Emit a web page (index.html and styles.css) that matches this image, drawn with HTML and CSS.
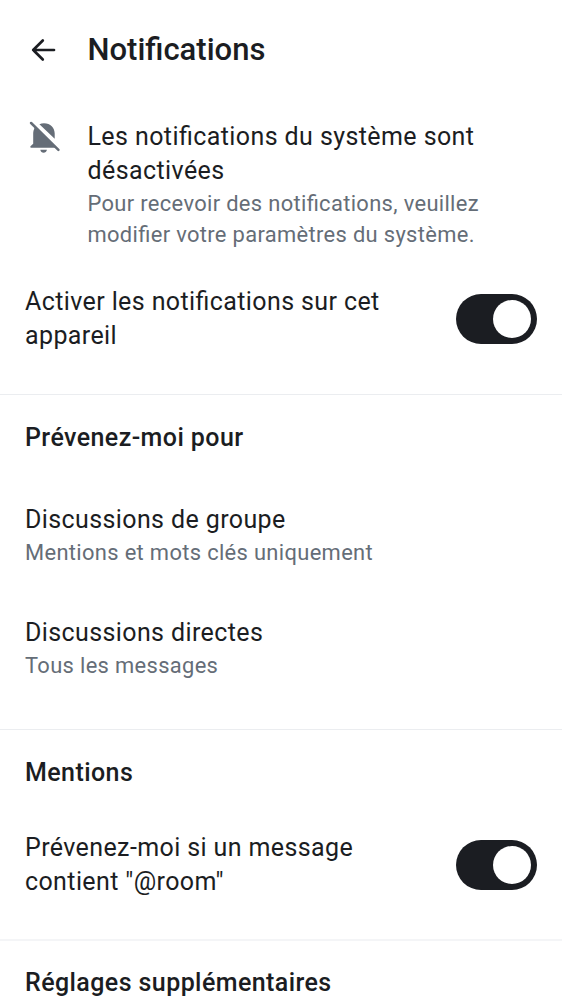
FILE: index.html
```html
<!DOCTYPE html>
<html lang="fr">
<head>
<meta charset="utf-8">
<title>Notifications</title>
<link rel="stylesheet" href="styles.css">
</head>
<body>
<header class="app-bar">
  <svg class="back" viewBox="0 0 32 32"><path d="M14.800 6.500 5.200 16l9.600 9.500M5.200 16H26" fill="none" stroke="currentColor" stroke-width="2.700" stroke-linecap="round" stroke-linejoin="round"/></svg>
  <h1 class="page-title">Notifications</h1>
</header>
<main>
  <section class="notice">
    <svg class="bell" viewBox="0 0 32 34"><path d="M11.400 4.200C12.800 3.500 14.300 3.200 16 3.200C22.500 3.200 26.700 8 26.700 13.500V18.800ZM6.300 6L28 27.800H3.200C2 27.800 2 26.300 3 25.700L5.200 23.800V13C5.200 11.500 5.600 10 6.300 8.700ZM12.300 29.700H18.900C18.500 33.600 12.700 33.600 12.300 29.700Z" fill="currentColor"/><path d="M3.100 3L30.400 29.800" stroke="currentColor" stroke-width="2.500" stroke-linecap="round"/></svg>
    <div>
      <div class="label">Les notifications du système sont<br>désactivées</div>
      <div class="sub">Pour recevoir des notifications, veuillez<br>modifier votre paramètres du système.</div>
    </div>
  </section>
  <section class="toggle-row">
    <div class="label">Activer les notifications sur cet<br>appareil</div>
    <div class="switch"><span class="thumb"></span></div>
  </section>
  <section class="group group-notify">
    <h2 class="heading">Prévenez-moi pour</h2>
    <div class="option">
      <div class="label">Discussions de groupe</div>
      <div class="sub">Mentions et mots clés uniquement</div>
    </div>
    <div class="option">
      <div class="label">Discussions directes</div>
      <div class="sub">Tous les messages</div>
    </div>
  </section>
  <section class="group group-mentions">
    <h2 class="heading">Mentions</h2>
    <div class="toggle-row">
      <div class="label">Prévenez-moi si un message<br>contient "@room"</div>
      <div class="switch"><span class="thumb"></span></div>
    </div>
  </section>
  <section class="group group-extra">
    <h2 class="heading">Réglages supplémentaires</h2>
  </section>
</main>
</body>
</html>
```
FILE: styles.css
```css
* { box-sizing: border-box; }
html { overflow: hidden; }
body {
  margin: 0;
  height: 1000px;
  overflow: hidden;
  background: #fff;
  color: #1b1d22;
  font-family: Roboto, sans-serif;
  font-feature-settings: "liga" 1;
}
.app-bar {
  height: 100px;
  padding: 0 28px;
  display: flex;
  align-items: center;
}
.back { width: 32px; height: 32px; }
.page-title {
  margin: 0 0 0 27.500px;
  font-size: 31px;
  font-weight: 500;
  line-height: 40px;
}
.notice {
  display: flex;
  gap: 27.500px;
  padding: 20px 28px 0;
  height: 165px;
}
.bell { width: 32px; height: 34px; color: #656d77; flex: none; }
.label { font-size: 25px; line-height: 34.400px; letter-spacing: .39px; white-space: nowrap; }
.sub { font-size: 21.900px; line-height: 31.250px; letter-spacing: .34px; color: #656d77; white-space: nowrap; }
.notice .label { letter-spacing: .41px; }
.notice .sub { margin-top: -1px; }
.toggle-row {
  display: flex;
  justify-content: space-between;
  align-items: center;
  padding: 0 25px;
  height: 107px;
}
.toggle-row .label { padding-top: 1px; }
.switch {
  width: 81px;
  height: 50px;
  border-radius: 25px;
  background: #1b1d22;
  display: flex;
  align-items: center;
  justify-content: flex-end;
  padding: 6px;
}
.thumb { width: 38px; height: 38px; border-radius: 50%; background: #fff; }
.toggle-row + .group { margin-top: 22px; }
.group { border-top: 1px solid #ebedf0; }
.heading {
  margin: 0;
  padding: 25px 25px 0;
  height: 83px;
  font-size: 25px;
  font-weight: 500;
  line-height: 36px;
  letter-spacing: .42px;
}
.group-notify { height: 335px; }
.option { height: 112.500px; padding: 25px 25px 0; }
.group-mentions { height: 210px; }
.group-mentions .toggle-row { height: 103px; }
.group-extra { border-top: 2px solid #f4f5f7; }
.group-extra .heading { padding-top: 24px; }
```
